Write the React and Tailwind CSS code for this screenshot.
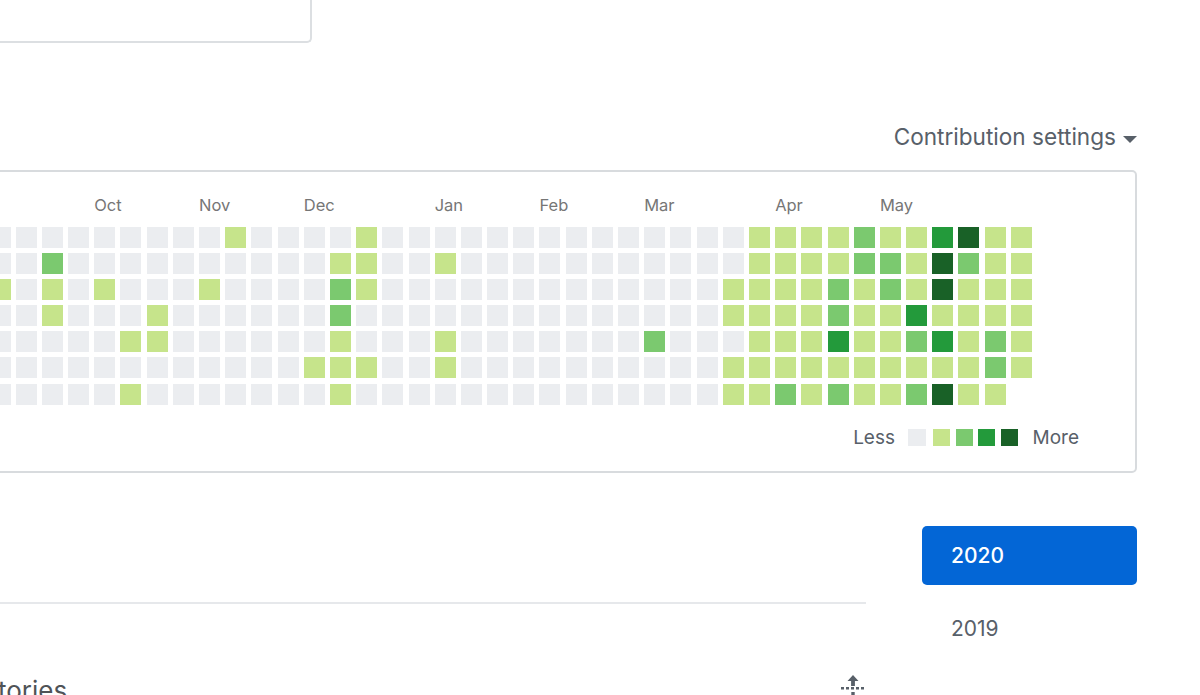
const MONTHS = [
  { name: 'Oct', cls: 'col-start-5' },
  { name: 'Nov', cls: 'col-start-9' },
  { name: 'Dec', cls: 'col-start-13' },
  { name: 'Jan', cls: 'col-start-18' },
  { name: 'Feb', cls: 'col-start-22' },
  { name: 'Mar', cls: 'col-start-26' },
  { name: 'Apr', cls: 'col-start-31' },
  { name: 'May', cls: 'col-start-35' },
];

const LEVELS = {
  '.': 'bg-[#ebedf0]',
  1: 'bg-[#c6e48b]',
  2: 'bg-[#7bc96f]',
  3: 'bg-[#239a3b]',
  4: 'bg-[#196127]',
  x: 'bg-transparent',
};

// one string per weekday, one character per week
const WEEKDAYS = [
  '.........1....1..............111121134' + '11',
  '..2..........11..1...........111122142' + '11',
  '1.1.1...1....21.............1111212141' + '11',
  '..1...1......2..............1111211311' + '11',
  '.....11......1...1.......2...111311231' + '21',
  '............111..1..........1111111111' + '21',
  '.....1.......1..............1121211241' + '1x',
];

function UnfoldIcon() {
  return (
    <svg className="mt-[-2px]" width="26" height="24" viewBox="0 0 26 24" fill="#586069">
      <path d="M13 1l5.5 6h-3.6v5h-3.8V7H7.500z" />
      <path d="M1 13h3v2.400H1zM6 13h3v2.400H6zM11 13h3v2.400h-3zM16 13h3v2.400h-3zM21 13h3v2.400h-3z" />
      <path d="M11.300 18h3.400v6h-3.400z" />
    </svg>
  );
}

export default function App() {
  const cells = WEEKDAYS.join('').split('');

  return (
    <div className="w-[1200px] h-[695px] overflow-hidden bg-white font-['Inter','Liberation_Sans',sans-serif] text-[#586069]">
      <div className="ml-[-40px] w-[1177px]">
        <div className="h-[43px] w-[352px] rounded-b-[5px] border-2 border-t-0 border-[#dcdfe2]" />

        <div className="mt-[80px] flex h-[29px] items-center justify-end">
          <span className="text-[22.600px] leading-none">Contribution settings</span>
          <span className="ml-[7px] mt-[3px] h-0 w-0 border-x-[7px] border-t-[7px] border-x-transparent border-t-[#586069]" />
        </div>

        <div className="mt-[18px] h-[303px] rounded-[5px] border-2 border-[#d8dbde] pl-[27.500px] pt-[22.500px]">
          <div className="grid grid-cols-[repeat(40,21px)] gap-x-[5.200px] text-[16.500px] leading-[20px] text-[#767676]">
            {MONTHS.map((m) => (
              <span key={m.name} className={`${m.cls} whitespace-nowrap`}>{m.name}</span>
            ))}
          </div>
          <div className="mt-[12px] grid grid-cols-[repeat(40,21px)] auto-rows-[21px] gap-x-[5.200px] gap-y-[5.200px]">
            {cells.map((c, i) => (
              <div key={i} className={LEVELS[c]} />
            ))}
          </div>
          <div className="mt-[24px] flex items-center justify-end pr-[56px] text-[19px] leading-[18px]">
            <span>Less</span>
            <div className="ml-[13px] h-[17px] w-[18px] bg-[#ebedf0]" />
            <div className="ml-[7px] h-[17px] w-[17px] bg-[#c6e48b]" />
            <div className="ml-[5.500px] h-[17px] w-[17px] bg-[#7bc96f]" />
            <div className="ml-[5.500px] h-[17px] w-[17px] bg-[#239a3b]" />
            <div className="ml-[5.500px] h-[17px] w-[17px] bg-[#196127]" />
            <span className="ml-[15px]">More</span>
          </div>
        </div>

        <div className="flex">
          <div className="w-[906px] shrink-0 pt-[129px]">
            <div className="h-[1.500px] bg-[#e6e8eb]" />
            <div className="mt-[72px] flex items-start justify-between">
              <span className="ml-[-191px] whitespace-nowrap text-[26px] leading-[30px] text-[#24292e] opacity-80">Contributed repositories</span>
              <UnfoldIcon />
            </div>
          </div>
          <div className="ml-[56px] flex-1 pt-[53px]">
            <div className="flex h-[59px] items-center rounded-[5px] bg-[#0366d6] pl-[29px] text-[21px] font-medium text-white">2020</div>
            <div className="mt-[14px] flex h-[59px] items-center pl-[29px] text-[21px] text-[#586069]">2019</div>
          </div>
        </div>
      </div>
    </div>
  );
}
